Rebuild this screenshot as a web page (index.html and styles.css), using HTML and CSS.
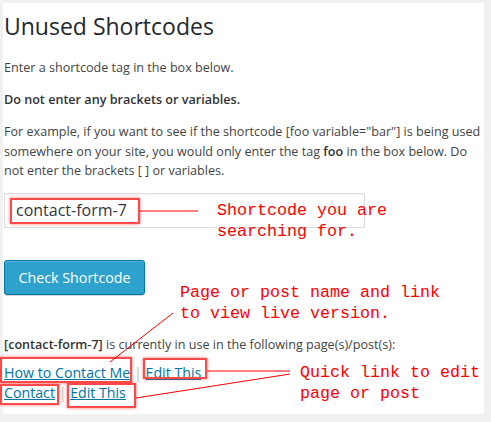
FILE: index.html
```html
<!DOCTYPE html>
<html>
<head>
<meta charset="utf-8">
<link rel="stylesheet" href="styles.css">
</head>
<body>
<div class="panel">
  <h2 class="title">Unused Shortcodes</h2>
  <p class="text">Enter a shortcode tag in the box below.</p>
  <p class="text strong">Do not enter any brackets or variables.</p>
  <p class="text">For example, if you want to see if the shortcode [foo variable="bar"] is being used somewhere on your site, you would only enter the tag <b>foo</b> in the box below. Do not enter the brackets [ ] or variables.</p>
  <div class="field"><span class="field-value">contact-form-7</span></div>
  <button class="btn">Check Shortcode</button>
  <p class="text result"><b>[contact-form-7]</b> is currently in use in the following page(s)/post(s):</p>
  <div class="links">
    <div class="link-row"><a href="#" class="link">How to Contact Me</a> <span class="sep">|</span> <a href="#" class="link">Edit This</a></div>
    <div class="link-row"><a href="#" class="link">Contact</a> <span class="sep">|</span> <a href="#" class="link">Edit This</a></div>
  </div>
</div>

<div class="note note-search">Shortcode you are<br>searching for.</div>
<div class="note note-page">Page or post name and link<br>to view live version.</div>
<div class="note note-edit">Quick link to edit<br>page or post</div>

<div class="mark mark-input"></div>
<div class="mark mark-page1"></div>
<div class="mark mark-edit1"></div>
<div class="mark mark-page2"></div>
<div class="mark mark-edit2"></div>

<svg class="lines" width="491" height="422" viewBox="0 0 491 422">
  <line x1="140" y1="211" x2="198" y2="211" stroke="#f00" stroke-width="1"/>
  <line x1="110" y1="362" x2="173" y2="313" stroke="#f00" stroke-width="1"/>
  <line x1="207" y1="371" x2="290" y2="371" stroke="#f00" stroke-width="1"/>
  <line x1="136" y1="398" x2="290" y2="374" stroke="#f00" stroke-width="1"/>
</svg>
</body>
</html>
```
FILE: styles.css
```css
html, body {
  margin: 0;
  padding: 0;
}
body {
  background: #f1f1f1;
  width: 491px;
  height: 422px;
  position: relative;
  overflow: hidden;
  font-family: "Open Sans", "Liberation Sans", sans-serif;
}
.panel {
  margin: 3px 0 0 3px;
  width: 481px;
  height: 411px;
  background: #fff;
  padding: 0 0 0 1px;
  box-sizing: border-box;
  color: #444;
}
.title {
  margin: 0;
  padding-top: 9px;
  font-size: 23px;
  font-weight: 400;
  line-height: 29px;
  color: #23282d;
}
.text {
  margin: 0;
  font-size: 12.6px;
  line-height: 19.5px;
}
.title + .text { margin-top: 17px; }
.strong { font-weight: 600; margin-top: 12px; color: #333; }
.strong + .text { margin-top: 13px; }
.text b { font-weight: 600; color: #333; }
.field {
  margin-top: 12px;
  width: 361px;
  height: 35px;
  border: 1px solid #ddd;
  box-sizing: border-box;
  box-shadow: inset 0 1px 2px rgba(0,0,0,.07);
  display: flex;
  align-items: center;
  padding-left: 11px;
}
.field-value {
  font-size: 16px;
  color: #32373c;
}
.btn {
  display: block;
  margin-top: 32px;
  width: 141px;
  height: 35px;
  background: #2ea2cc;
  border: 1px solid #0074a2;
  border-radius: 3px;
  box-shadow: inset 0 1px 0 rgba(120,200,230,.5), 0 1px 0 rgba(0,0,0,.15);
  color: #fff;
  font-family: "Open Sans", "Liberation Sans", sans-serif;
  font-size: 14.3px;
  padding: 0;
}
.result { margin-top: 40px; }
.links { margin-top: 9px; }
.link-row {
  font-size: 14.2px;
  line-height: 20px;
}
.link { color: #0074a2; text-decoration: underline; }
.sep { color: #bbb; }

.note {
  position: absolute;
  font-family: "Liberation Mono", "Courier New", monospace;
  font-size: 16.67px;
  line-height: 21px;
  color: #f00;
  white-space: nowrap;
}
.note-search { left: 217px; top: 200px; }
.note-page { left: 180px; top: 282px; }
.note-edit { left: 300px; top: 362px; }

.mark {
  position: absolute;
  border: 2px solid #ff4a4a;
  box-shadow: 0 0 3px rgba(255,60,60,.7);
  box-sizing: border-box;
}
.mark-input { left: 10px; top: 198px; width: 130px; height: 26px; }
.mark-page1 { left: 0; top: 357px; width: 132px; height: 26px; }
.mark-edit1 { left: 143px; top: 358px; width: 64px; height: 21px; }
.mark-page2 { left: 0; top: 384px; width: 59px; height: 21px; }
.mark-edit2 { left: 67px; top: 383px; width: 69px; height: 25px; }

.lines {
  position: absolute;
  left: 0;
  top: 0;
  pointer-events: none;
}
```
